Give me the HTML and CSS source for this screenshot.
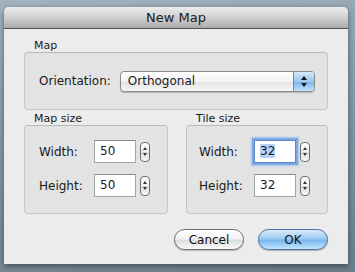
FILE: index.html
```html
<!DOCTYPE html>
<html lang="en">
<head>
    <meta charset="UTF-8">
    <meta name="viewport" content="width=device-width, initial-scale=1.0">
    <title>New Map</title>
    <link rel="stylesheet" href="styles.css">
</head>
<body>
    <div class="window">
        <div class="title-bar">New Map</div>
        <div class="content">
            <div class="group-title">Map</div>
            <div class="group map-group">
                <span class="label">Orientation:</span>
                <div class="combo">
                    <span class="combo-text">Orthogonal</span>
                    <span class="combo-arrows">
                        <svg width="8" height="11" viewBox="0 0 8 11"><path d="M4 0 L7 4 L1 4 Z M1 7 L7 7 L4 11 Z" fill="#111"/></svg>
                    </span>
                </div>
            </div>

            <div class="size-row">
                <div class="size-col">
                    <div class="group-title">Map size</div>
                    <div class="group size-group">
                        <div class="field-row">
                            <span class="label field-label">Width:</span>
                            <div class="input">50</div>
                            <div class="stepper"><span class="up"></span><span class="down"></span></div>
                        </div>
                        <div class="field-row">
                            <span class="label field-label">Height:</span>
                            <div class="input">50</div>
                            <div class="stepper"><span class="up"></span><span class="down"></span></div>
                        </div>
                    </div>
                </div>
                <div class="size-col">
                    <div class="group-title">Tile size</div>
                    <div class="group size-group tile-group">
                        <div class="field-row">
                            <span class="label field-label">Width:</span>
                            <div class="input focused"><span class="selected">32</span></div>
                            <div class="stepper"><span class="up"></span><span class="down"></span></div>
                        </div>
                        <div class="field-row">
                            <span class="label field-label">Height:</span>
                            <div class="input">32</div>
                            <div class="stepper"><span class="up"></span><span class="down"></span></div>
                        </div>
                    </div>
                </div>
            </div>

            <div class="buttons">
                <button class="btn cancel-btn">Cancel</button>
                <button class="btn ok-btn">OK</button>
            </div>
        </div>
    </div>
</body>
</html>
```

FILE: styles.css
```css
*{
    margin: 0;
    padding: 0;
    box-sizing: border-box;
}
body{
    width: 355px;
    height: 272px;
    overflow: hidden;
    padding: 7px 7px 0 4px;
    font-family: "DejaVu Sans", sans-serif;
    font-size: 12px;
    color: #1a1a1a;
    background: linear-gradient(170deg, #a3b3c0 0%, #8c9eac 40%, #6d7f8c 100%);
}
.window{
    width: 344px;
    height: 257px;
    background-color: #ececec;
    border-radius: 5px 5px 0 0;
    box-shadow: 0 2px 6px rgba(0,0,0,0.45);
    overflow: hidden;
}
.title-bar{
    height: 22px;
    line-height: 21px;
    text-align: center;
    font-size: 13px;
    color: #1a1a1a;
    background: linear-gradient(#ececec, #c9c9c9 60%, #a9a9a9);
    border-bottom: 1px solid #515151;
}
.content{
    padding: 10px 20px 0 20px;
}
.group-title{
    font-size: 11px;
    line-height: 13px;
    padding-left: 10px;
    height: 13px;
}
.group{
    background-color: #e3e3e3;
    border: 1px solid #c6c6c6;
    border-top-color: #b9b9b9;
    border-radius: 4px;
}
.map-group{
    height: 58px;
    display: flex;
    align-items: center;
    padding: 0 12px 0 14px;
    gap: 9px;
}
.label{
    font-size: 12px;
}
.combo{
    flex: 1;
    height: 21px;
    display: flex;
    border: 1px solid #8b8b8b;
    border-radius: 4px;
    background: linear-gradient(#ffffff, #f3f3f3 50%, #e4e4e4 55%, #f7f7f7);
    overflow: hidden;
    box-shadow: 0 1px 1px rgba(0,0,0,0.2);
}
.combo-text{
    flex: 1;
    padding-left: 7px;
    line-height: 19px;
    font-size: 12px;
}
.combo-arrows{
    width: 21px;
    display: flex;
    align-items: center;
    justify-content: center;
    border-left: 1px solid #6a8bc0;
    background: linear-gradient(#d6e9fb, #98c6f0 50%, #7fb6ec 55%, #bfe3ff);
}
.size-row{
    display: flex;
    gap: 18px;
    margin-top: 2px;
}
.size-col{
    width: 144px;
}
.size-col + .size-col{
    width: 142px;
}
.size-group{
    height: 89px;
    padding: 14px 0 0 14px;
    display: flex;
    flex-direction: column;
    gap: 11px;
}
.tile-group{
    padding-left: 12px;
}
.field-row{
    display: flex;
    align-items: center;
    height: 23px;
}
.field-label{
    width: 55px;
}
.input{
    width: 42px;
    height: 23px;
    background-color: #fff;
    border: 1px solid #a5a5a5;
    border-top-color: #8a8a8a;
    padding-left: 5px;
    line-height: 21px;
    font-size: 12px;
}
.input.focused{
    box-shadow: 0 0 0 2px #7da7e0, 0 0 2px 3px #a9c7ee;
    border-color: #5c87c8;
}
.selected{
    background-color: #b4d2fa;
}
.stepper{
    margin-left: 4px;
    width: 10px;
    height: 20px;
    border: 1px solid #6e6e6e;
    border-radius: 4px;
    background: linear-gradient(#ffffff, #ededed 50%, #dcdcdc 52%, #f8f8f8);
    display: flex;
    flex-direction: column;
    align-items: center;
    justify-content: space-around;
    padding: 3px 0;
}
.up, .down{
    width: 0;
    height: 0;
    border-left: 2px solid transparent;
    border-right: 2px solid transparent;
}
.up{
    border-bottom: 3px solid #333;
}
.down{
    border-top: 3px solid #333;
}
.buttons{
    display: flex;
    justify-content: flex-end;
    gap: 14px;
    margin-top: 15px;
}
.btn{
    width: 70px;
    height: 21px;
    border-radius: 11px;
    font-family: "DejaVu Sans", sans-serif;
    font-size: 12px;
    color: #111;
    border: 1px solid #6f6f6f;
    box-shadow: 0 1px 1px rgba(0,0,0,0.25);
}
.cancel-btn{
    background: linear-gradient(#ffffff, #f2f2f2 45%, #dedede 55%, #fafafa);
}
.ok-btn{
    border-color: #4f6e9f;
    background: linear-gradient(#d9ebfb, #9ccbf3 45%, #7ab7ee 55%, #bfe6ff);
}
```
